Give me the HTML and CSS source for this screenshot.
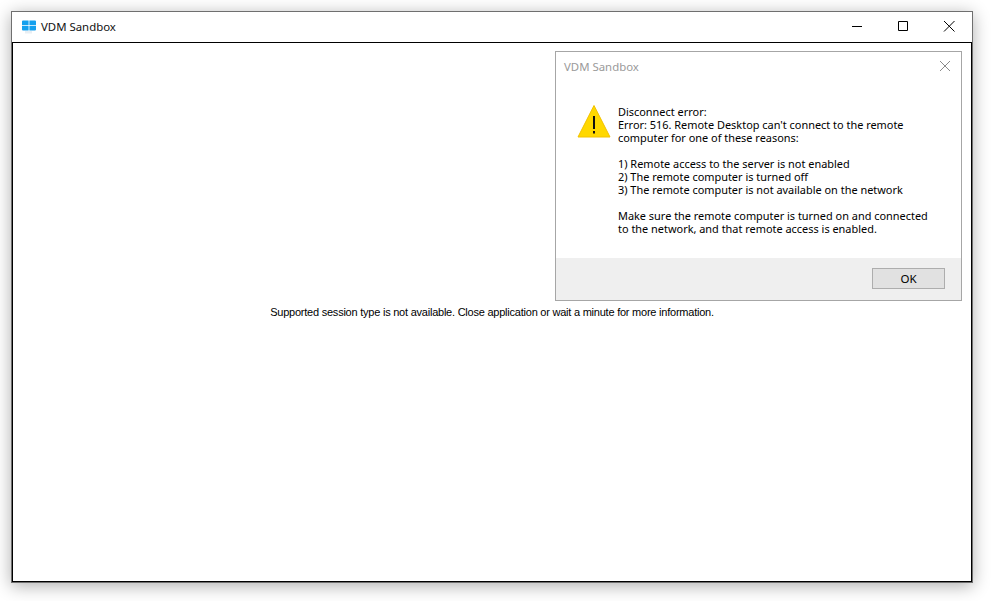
FILE: index.html
```html
<!DOCTYPE html>
<html lang="en">
<head>
<meta charset="utf-8">
<title>VDM Sandbox</title>
<link rel="stylesheet" href="styles.css">
</head>
<body>
<div class="window">
  <header class="titlebar">
    <svg class="app-icon" width="14" height="15" viewBox="0 0 14 15">
      <path class="app-icon-fill" d="M1 .5h5.600v4.700H0V1.500a1 1 0 0 1 1-1zM7.400.500H13a1 1 0 0 1 1 1v3.700H7.400zM0 6h6.600v4.500H1a1 1 0 0 1-1-1zM7.400 6H14v3.500a1 1 0 0 1-1 1H7.400z"/>
      <path class="app-icon-base" d="M3 11h7v2.500H3z"/>
    </svg>
    <span class="title">VDM Sandbox</span>
    <div class="controls">
      <svg class="ctl" width="46" height="30" viewBox="0 0 46 30"><path d="M18 14.500h10" /></svg>
      <svg class="ctl" width="46" height="30" viewBox="0 0 46 30"><path d="M18.500 9.500h9v9h-9z" /></svg>
      <svg class="ctl" width="46" height="30" viewBox="0 0 46 30"><path d="M18 9l10.500 10.500M28.500 9L18 19.500" /></svg>
    </div>
  </header>
  <main class="client">
    <p class="status">Supported session type is not available. Close application or wait a minute for more information.</p>
    <section class="dialog">
      <div class="dialog-head">
        <span class="dialog-title">VDM Sandbox</span>
        <svg class="dialog-close" width="12" height="12" viewBox="0 0 12 12"><path d="M1 1l10 10M11 1L1 11"/></svg>
      </div>
      <div class="dialog-body">
        <svg class="warn" width="34" height="34" viewBox="0 0 34 34">
          <path class="warn-tri" d="M17 1.500L33 33H1z"/>
          <path class="warn-mark" d="M16 12h2v13h-2zM16 27h2v2.500h-2z"/>
        </svg>
        <div class="message">
          <p>Disconnect error:<br>Error: 516. Remote Desktop can't connect to the remote<br>computer for one of these reasons:</p>
          <p>1) Remote access to the server is not enabled<br>2) The remote computer is turned off<br>3) The remote computer is not available on the network</p>
          <p>Make sure the remote computer is turned on and connected<br>to the network, and that remote access is enabled.</p>
        </div>
      </div>
      <div class="dialog-foot"><button class="ok">OK</button></div>
    </section>
  </main>
</div>
</body>
</html>
```
FILE: styles.css
```css
html, body { margin: 0; height: 100%; background: #fff; overflow: hidden; }
body { padding: 11px 21px 18px 11px; box-sizing: border-box; font-family: "Noto Sans", "Open Sans", sans-serif; color: #000; }
.window { width: 962px; height: 572px; box-sizing: border-box; display: flex; flex-direction: column; position: relative; border: 1px solid #6f6f6f; box-shadow: 0 3px 16px rgba(0,0,0,.32); background: #fff; }
.titlebar { height: 30px; display: flex; align-items: center; flex: none; background: #fff; }
.app-icon { margin-left: 10px; flex: none; }
.app-icon-fill { fill: #14a0ee; }
.app-icon-base { fill: #e8eef3; }
.title { margin-left: 5px; font-size: 11.400px; line-height: 30px; color: #111; }
.controls { margin-left: auto; display: flex; }
.ctl { display: block; fill: none; stroke: #000; stroke-width: 1; }
.client { flex: 1; display: flex; align-items: center; justify-content: center; position: relative; border: 1px solid #000; }
.status { margin: 0; font-family: "Liberation Sans", Arial, sans-serif; font-size: 11px; letter-spacing: -.23px; line-height: 14px; }
.dialog { position: absolute; top: 8px; right: 9px; width: 407px; height: 250px; box-sizing: border-box; display: flex; flex-direction: column; background: #fff; border: 1px solid #a6a6a6; }
.dialog-head { height: 28px; display: flex; align-items: center; justify-content: space-between; padding: 0 10px 0 8px; flex: none; }
.dialog-title { font-size: 11.400px; color: #9a9a9a; }
.dialog-close { fill: none; stroke: #8a8a8a; stroke-width: 1; }
.dialog-body { flex: 1; display: flex; padding: 25px 0 0 21px; }
.warn { flex: none; margin-top: -1px; }
.warn-tri { fill: #ffd800; stroke: #f2c200; stroke-width: 1; }
.warn-mark { fill: #111; }
.message { margin-left: 7px; font-size: 10.930px; line-height: 13px; white-space: nowrap; }
.message p { margin: 0 0 13px; }
.dialog-foot { height: 42px; flex: none; background: #efefef; display: flex; justify-content: flex-end; align-items: flex-start; padding: 10px 16px 0 0; box-sizing: border-box; }
.ok { width: 73px; height: 21px; padding: 0; background: #e1e1e1; border: 1px solid #adadad; font: 11.500px "Noto Sans", sans-serif; color: #000; }
```
